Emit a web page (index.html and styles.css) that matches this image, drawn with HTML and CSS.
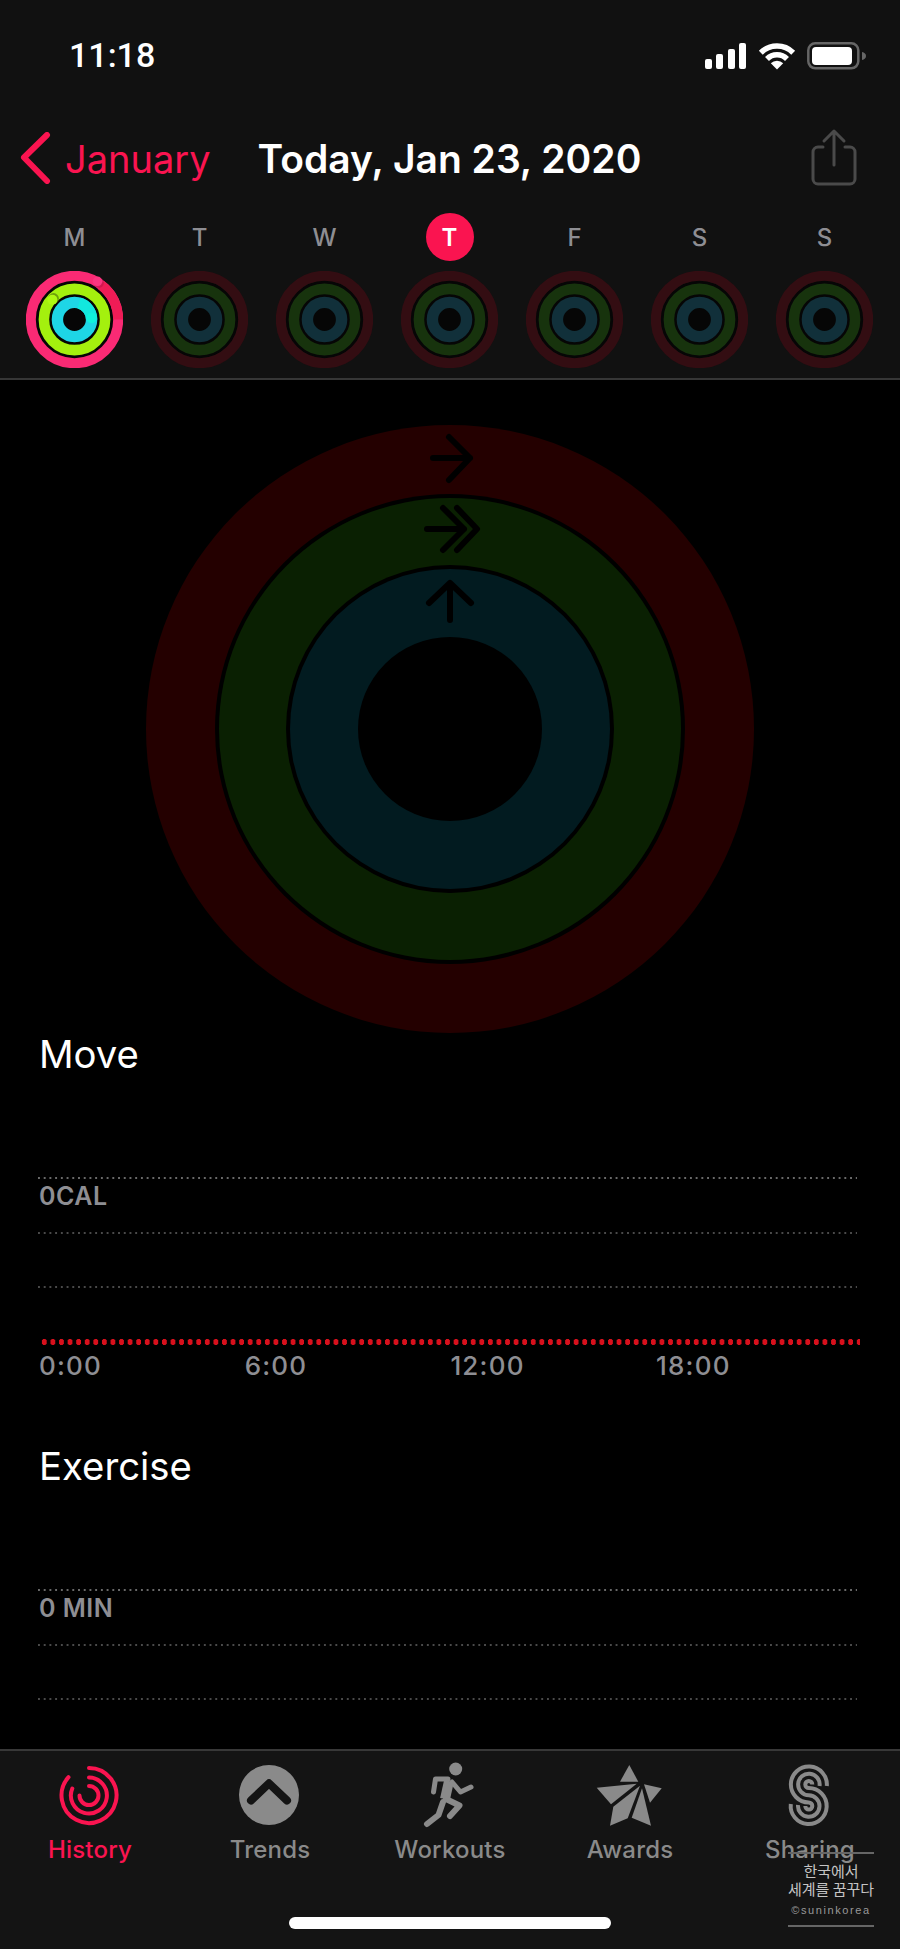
FILE: index.html
```html
<!DOCTYPE html>
<html lang="en">
<head>
  <meta charset="UTF-8">
  <title>Activity History</title>
  <link rel="stylesheet" href="styles.css">
</head>
<body>

  <svg class="defs" width="0" height="0">
    <symbol id="ring-empty" viewBox="0 0 97 97">
      <circle cx="48.5" cy="48.5" r="39" class="ring-back"/>
      <circle cx="48.5" cy="48.5" r="43.7" class="dim-red"/>
      <circle cx="48.5" cy="48.5" r="30.6" class="dim-green"/>
      <circle cx="48.5" cy="48.5" r="17.1" class="dim-blue"/>
    </symbol>
  </svg>

  <div class="screen">
    <header class="top">
      <div class="status">
        <span class="time">11:18</span>
        <div class="status-icons">
          <svg class="signal" width="42" height="26" viewBox="0 0 42 26">
            <rect x="0" y="16" width="7" height="10" rx="2"/>
            <rect x="11" y="11" width="7" height="15" rx="2"/>
            <rect x="23" y="6" width="7" height="20" rx="2"/>
            <rect x="34" y="0" width="7" height="26" rx="2"/>
          </svg>
          <svg class="wifi" width="38" height="28" viewBox="0 0 38 28">
            <path d="M2.8 10.7a23 23 0 0 1 32.4 0"/>
            <path d="M9 17a14 14 0 0 1 20 0"/>
            <path class="wifi-dot" d="M19 27.5l-6.2-6.2a8.8 8.8 0 0 1 12.4 0z"/>
          </svg>
          <svg class="battery" width="60" height="28" viewBox="0 0 60 28">
            <rect x="1.3" y="1.3" width="50" height="25" rx="7" class="battery-case"/>
            <rect x="5" y="5" width="40" height="18" rx="4" class="battery-level"/>
            <path d="M55 10v8c2.500-.5 4-2 4-4s-1.500-3.500-4-4z" class="battery-nub"/>
          </svg>
        </div>
      </div>

      <nav class="nav">
        <a class="back">
          <svg width="32" height="52" viewBox="0 0 32 52"><path d="M27 3L4 25.500 27 49"/></svg>
          <span>January</span>
        </a>
        <h1>Today, Jan 23, 2020</h1>
        <svg class="share" width="50" height="60" viewBox="0 0 50 60">
          <path d="M14 19H9a5 5 0 0 0-5 5v27a5 5 0 0 0 5 5h32a5 5 0 0 0 5-5V24a5 5 0 0 0-5-5h-5"/>
          <path d="M25 37V3M15 13L25 3l10 10"/>
        </svg>
      </nav>

      <div class="week">
        <div class="day"><span class="day-name">M</span>
          <svg class="ring" viewBox="0 0 97 97">
            <circle cx="48.500" cy="48.500" r="39" class="ring-back"/>
            <circle cx="48.500" cy="48.500" r="43.700" class="full-red"/>
            <path d="M75 14A43.700 43.700 0 0 1 92.200 48.500" class="full-red-end"/>
            <circle cx="72.800" cy="12" r="5" class="cap-shadow"/>
            <circle cx="71.500" cy="10.300" r="4.800" class="cap-red"/>
            <circle cx="48.500" cy="48.500" r="30.600" class="full-green"/>
            <circle cx="27.500" cy="27.500" r="5.400" class="cap-shadow-soft"/>
            <circle cx="26.400" cy="28.800" r="5" class="cap-green"/>
            <circle cx="48.500" cy="48.500" r="17.100" class="full-blue"/>
            <path d="M65.600 48.500A17.100 17.100 0 0 0 53 32" class="full-blue-end"/>
            <circle cx="65.600" cy="47" r="5.200" class="cap-blue"/>
          </svg>
        </div>
        <div class="day"><span class="day-name">T</span><svg class="ring"><use href="#ring-empty"/></svg></div>
        <div class="day"><span class="day-name">W</span><svg class="ring"><use href="#ring-empty"/></svg></div>
        <div class="day"><span class="day-name today">T</span><svg class="ring"><use href="#ring-empty"/></svg></div>
        <div class="day"><span class="day-name">F</span><svg class="ring"><use href="#ring-empty"/></svg></div>
        <div class="day"><span class="day-name">S</span><svg class="ring"><use href="#ring-empty"/></svg></div>
        <div class="day"><span class="day-name">S</span><svg class="ring"><use href="#ring-empty"/></svg></div>
      </div>
    </header>

    <main class="content">
      <svg class="big-rings" width="608" height="608" viewBox="0 0 608 608">
        <circle cx="304" cy="304" r="304" fill="#240000"/>
        <circle cx="304" cy="304" r="235" fill="#000"/>
        <circle cx="304" cy="304" r="231" fill="#0a2002"/>
        <circle cx="304" cy="304" r="164" fill="#000"/>
        <circle cx="304" cy="304" r="160" fill="#021b20"/>
        <circle cx="304" cy="304" r="92" fill="#000"/>
        <g class="arrows">
          <path d="M287 33H324M303 12L324 33L303 55"/>
          <path d="M281 104H318M297 83L318 104L297 125M311 83L331 104L311 125"/>
          <path d="M304 195V159M283 178L304 158L325 178"/>
        </g>
      </svg>

      <section class="metric">
        <h2>Move</h2>
        <div class="chart">
          <div class="row"><span class="row-label">0CAL</span></div>
          <div class="row row-dim"></div>
          <div class="row row-dim"></div>
          <div class="baseline"></div>
          <div class="axis"><span>0:00</span><span>6:00</span><span>12:00</span><span>18:00</span></div>
        </div>
      </section>

      <section class="metric">
        <h2>Exercise</h2>
        <div class="chart">
          <div class="row"><span class="row-label">0 MIN</span></div>
          <div class="row row-dim"></div>
          <div class="row row-dim"></div>
        </div>
      </section>
    </main>

    <footer class="tabbar">
      <div class="tabs">
        <a class="tab active">
          <svg width="80" height="80" viewBox="0 0 80 80" class="icon-history">
            <path d="M39 13A27.500 27.500 0 1 1 18.500 22.200"/>
            <path d="M39 22.500A18 18 0 1 1 22.300 33.500"/>
            <path d="M39 31A9.500 9.500 0 1 1 29.500 40.500"/>
          </svg>
          <span>History</span>
        </a>
        <a class="tab">
          <svg width="80" height="80" viewBox="0 0 80 80">
            <circle cx="39" cy="40" r="30" class="icon-fill"/>
            <path d="M21 45.500L39 28.300L57 45.500" class="trend-chevron"/>
          </svg>
          <span>Trends</span>
        </a>
        <a class="tab">
          <svg width="80" height="80" viewBox="0 0 80 80">
            <circle cx="45.700" cy="14" r="6.500" class="icon-fill"/>
            <g class="runner">
              <path d="M38 24H25.500L23.500 37"/>
              <path d="M42 27L50.500 37L61 32"/>
              <path d="M36 44L49.500 50.500L40 61" class="runner-leg"/>
              <path d="M33 47L28.500 60L17 69" class="runner-leg"/>
              <path d="M39 26L35 44" class="runner-body"/>
            </g>
          </svg>
          <span>Workouts</span>
        </a>
        <a class="tab">
          <svg width="80" height="80" viewBox="0 0 80 80" class="icon-star">
            <polygon points="39.300,10 48.300,26.700 30,26.700"/>
            <polygon points="6.700,32.700 46.700,28.700 21,49.300"/>
            <polygon points="50,30.700 37.700,63.300 20,70.700 23.300,51.700"/>
            <polygon points="52,33.300 61,70.700 41.700,62.700"/>
            <polygon points="54,29.300 71.700,33.300 60,47.700"/>
          </svg>
          <span>Awards</span>
        </a>
        <a class="tab">
          <svg width="80" height="80" viewBox="0 0 80 80" class="icon-sharing">
            <path d="M56.800 31A18 18 0 1 0 38.800 47.500A3.500 3.500 0 1 1 35.300 51"/>
            <path d="M49.550 31A10.750 10.750 0 1 0 38.800 40.250A10.750 10.750 0 1 1 28.050 50"/>
            <path d="M42.300 29.500A3.500 3.500 0 1 0 38.800 33A18 18 0 1 1 20.800 49"/>
          </svg>
          <span>Sharing</span>
        </a>
      </div>
      <div class="home-bar"></div>
    </footer>

    <div class="watermark">
      <p>한국에서<br>세계를 꿈꾸다</p>
      <small>©suninkorea</small>
    </div>
  </div>

</body>
</html>
```

FILE: styles.css
```css
* {
  box-sizing: border-box;
}
html, body {
  margin: 0;
  background: #000;
}
body {
  font-family: Inter, "Liberation Sans", sans-serif;
}
h1, h2, p {
  margin: 0;
}
svg {
  display: block;
}
.defs {
  position: absolute;
}
.screen {
  position: relative;
  width: 900px;
  height: 1949px;
  display: flex;
  flex-direction: column;
  overflow: hidden;
  color: #fff;
}

/* top bar */
.top {
  height: 380px;
  flex: none;
  background: #111;
  border-bottom: 2px solid #363636;
}
.status {
  height: 110px;
  display: flex;
  align-items: center;
  justify-content: space-between;
  padding: 0 33px 0 69px;
}
.time {
  font-family: Roboto, sans-serif;
  font-size: 34px;
  font-weight: 500;
}
.status-icons {
  display: flex;
  align-items: center;
  gap: 11px;
  padding-top: 2px;
}
.signal {
  fill: #fff;
}
.wifi {
  fill: none;
  stroke: #fff;
  stroke-width: 5.5;
}
.wifi-dot {
  fill: #fff;
  stroke: none;
}
.battery-case {
  fill: none;
  stroke: #666;
  stroke-width: 2.5;
}
.battery-level {
  fill: #fff;
}
.battery-nub {
  fill: #666;
}

.nav {
  position: relative;
  height: 96px;
  display: flex;
  align-items: center;
  padding: 0 41px 0 20px;
}
.back {
  display: flex;
  align-items: center;
  gap: 13px;
  color: #fa1450;
  font-size: 38px;
  line-height: 52px;
}
.back svg {
  fill: none;
  stroke: #fa1450;
  stroke-width: 6;
  stroke-linecap: round;
  stroke-linejoin: round;
}
.back span {
  padding-top: 1px;
}
.nav h1 {
  margin-left: 47px;
  padding-top: 1px;
  font-size: 39px;
  font-weight: 600;
}
.share {
  margin-left: auto;
  fill: none;
  stroke: #4a4a4a;
  stroke-width: 3;
  stroke-linecap: round;
  stroke-linejoin: round;
}

.week {
  display: grid;
  grid-template-columns: repeat(7, 125px);
  padding: 7px 12px 0;
}
.day {
  display: flex;
  flex-direction: column;
  align-items: center;
  gap: 10px;
}
.day-name {
  width: 48px;
  height: 48px;
  line-height: 50px;
  text-align: center;
  font-size: 24px;
  font-weight: 500;
  color: #8e8e93;
}
.today {
  border-radius: 50%;
  background: #fa1450;
  color: #fff;
  font-weight: 600;
}
.ring {
  width: 97px;
  height: 97px;
  fill: none;
  stroke-width: 10;
}
.ring-back { fill: #060606; stroke: none; }
.dim-red { stroke: #330d12; }
.dim-green { stroke: #17330d; stroke-width: 10.600; }
.dim-blue { stroke: #11303a; stroke-width: 11.400; }
.full-red { stroke: #fa2a74; }
.full-red-end { stroke: #f01c56; }
.cap-shadow { fill: #c01448; opacity: .6; }
.cap-red { fill: #fb3580; }
.full-green { stroke: #a4f00e; stroke-width: 10.600; }
.cap-shadow-soft { fill: #5f8a0c; opacity: .8; }
.cap-green { fill: #aef812; }
.full-blue { stroke: #1ed6e6; stroke-width: 11.400; }
.full-blue-end { stroke: #12e8de; stroke-width: 11.400; }
.cap-blue { fill: #10f2dc; }

/* main scroll area */
.content {
  flex: 1;
  overflow: hidden;
  padding-top: 45px;
}
.big-rings {
  margin: 0 auto;
}
.arrows {
  fill: none;
  stroke: #000;
  stroke-width: 6;
  stroke-linecap: round;
  stroke-linejoin: round;
}
.metric {
  height: 412px;
  padding: 1px 40px 0 39px;
}
.metric h2 {
  height: 44px;
  line-height: 41px;
  font-size: 38.300px;
  font-weight: 400;
}
.chart {
  margin: 99px 3px 0 -1px;
}
.row {
  height: 54.500px;
  padding: 7px 0 0 1px;
  background: linear-gradient(to right, #6a6a6a 2px, transparent 2px) 0 0 / 5.730px 2px repeat-x;
}
.row-dim {
  background-image: linear-gradient(to right, #4a4a4a 2px, transparent 2px);
}
.row-label {
  font-size: 25px;
  font-weight: 600;
  line-height: 24px;
  letter-spacing: .5px;
  color: #8e8e93;
}
.baseline {
  height: 8px;
  margin: -3px -3px 0 2px;
  background: radial-gradient(ellipse 2.800px 3.500px at center, #d8101c 90%, transparent 100%) 0 0 / 8.580px 8px repeat-x;
}
.axis {
  display: grid;
  grid-template-columns: repeat(4, 205.700px);
  padding: 3px 0 0 1px;
  font-size: 26px;
  line-height: 34px;
  font-weight: 500;
  letter-spacing: 1.200px;
  color: #8e8e93;
}

/* tabs */
.tabbar {
  height: 200px;
  flex: none;
  display: flex;
  flex-direction: column;
  align-items: center;
  background: #141414;
  border-top: 2px solid #383838;
}
.tabs {
  width: 100%;
  display: grid;
  grid-template-columns: repeat(5, 180px);
  padding-top: 4px;
}
.tab {
  display: flex;
  flex-direction: column;
  align-items: center;
  font-size: 24px;
  line-height: 30px;
  font-weight: 500;
  letter-spacing: .2px;
  color: #8a8a8a;
}
.tab.active {
  color: #fa1450;
}
.icon-history path {
  fill: none;
  stroke: #fa1450;
  stroke-width: 4;
  stroke-linecap: round;
}
.icon-fill {
  fill: #8a8a8a;
}
.trend-chevron {
  fill: none;
  stroke: #141414;
  stroke-width: 8;
  stroke-linecap: round;
  stroke-linejoin: round;
}
.runner {
  fill: none;
  stroke: #8a8a8a;
  stroke-width: 5;
  stroke-linecap: round;
  stroke-linejoin: round;
}
.runner-leg {
  stroke-width: 6;
}
.runner-body {
  stroke-width: 10;
  stroke-linecap: butt;
}
.icon-star polygon {
  fill: #8a8a8a;
}
.icon-sharing path {
  fill: none;
  stroke: #8a8a8a;
  stroke-width: 4;
}
.home-bar {
  width: 322px;
  height: 12px;
  margin-top: 52px;
  border-radius: 6px;
  background: #fff;
}

/* watermark sits on top of the tab bar */
.watermark {
  position: absolute;
  left: 788px;
  top: 1852px;
  width: 86px;
  height: 75px;
  border-top: 2px solid #666;
  border-bottom: 2px solid #666;
  text-align: center;
  white-space: nowrap;
  color: #c4c4c4;
  font-family: "Noto Sans CJK KR", sans-serif;
}
.watermark p {
  padding-top: 8px;
  font-size: 15px;
  line-height: 18px;
}
.watermark small {
  display: block;
  margin-top: 6px;
  font-family: "Liberation Sans", sans-serif;
  font-size: 11px;
  line-height: 12px;
  letter-spacing: 1.600px;
  color: #999;
}
```
